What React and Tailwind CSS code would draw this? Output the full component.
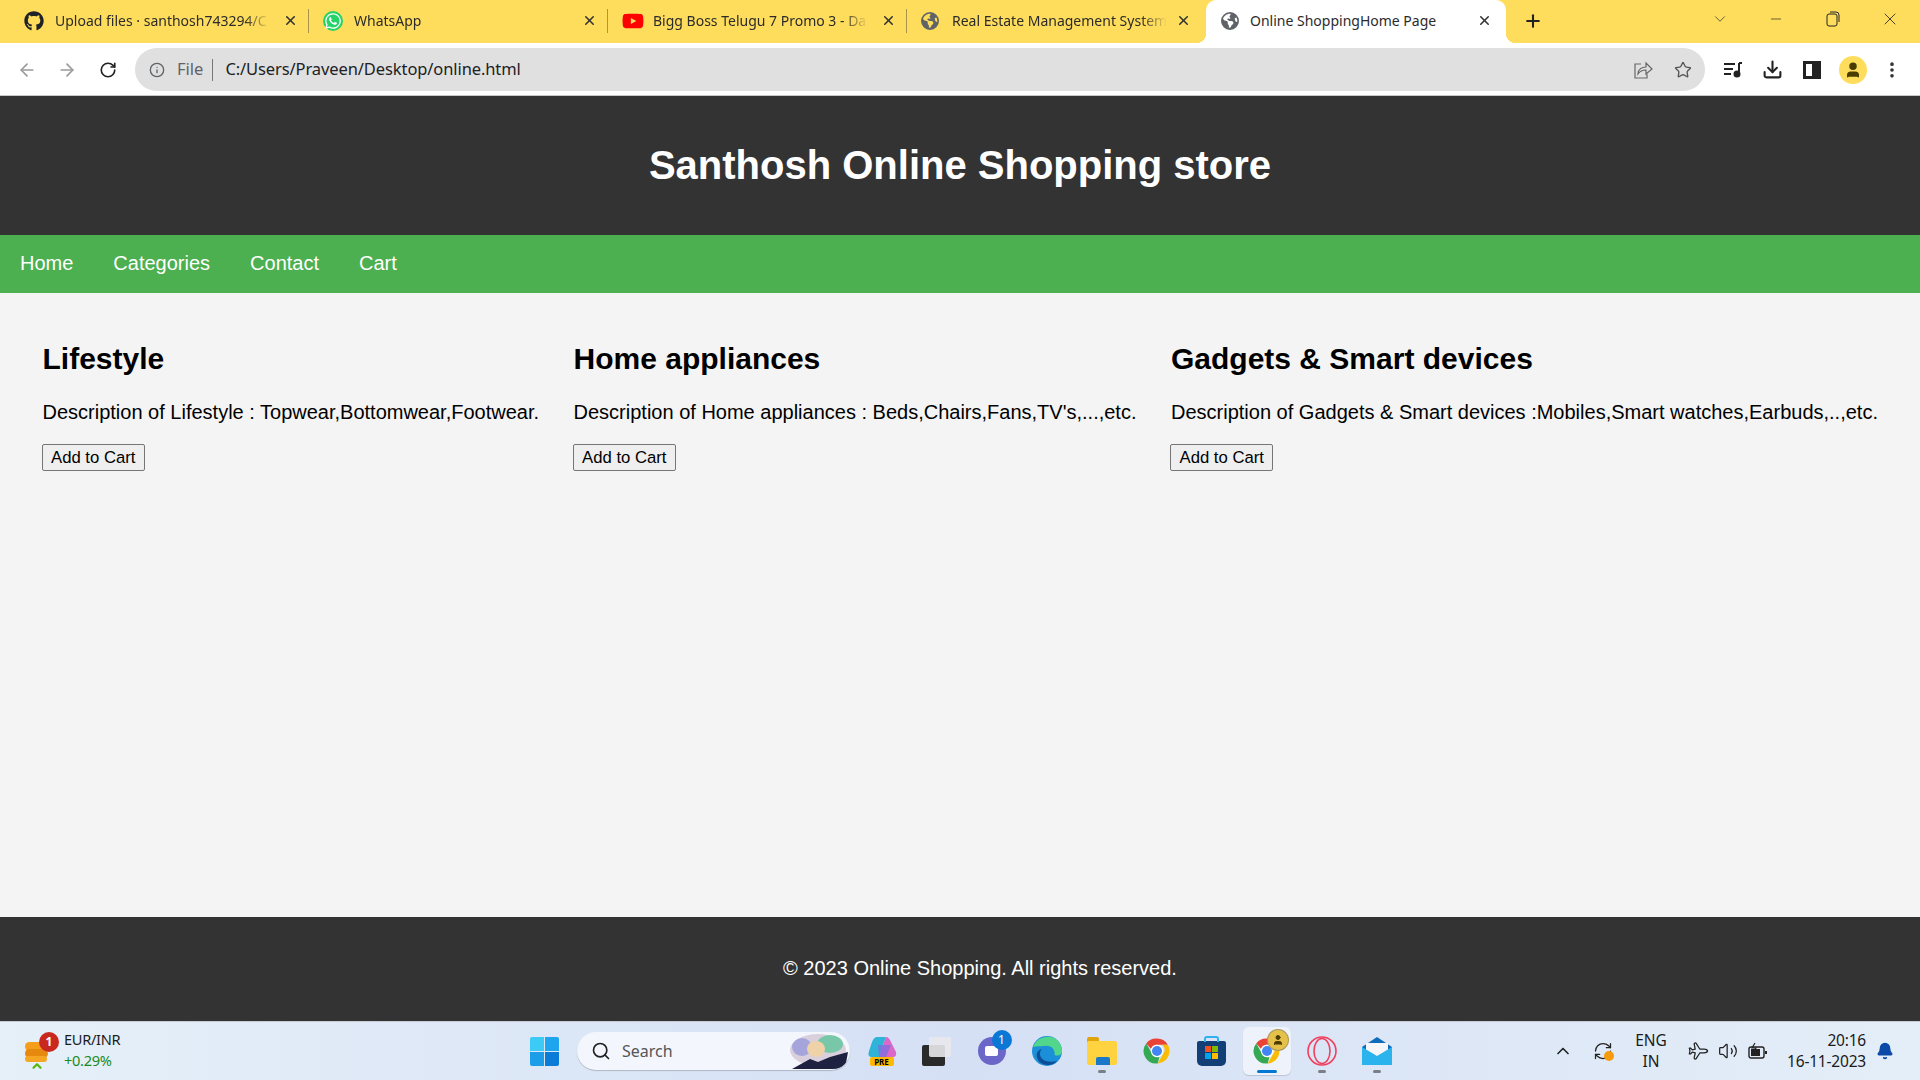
import { ArrowLeft, ArrowRight, RotateCw, Info, Star, X, Plus, ChevronDown, Minus, Download, MoreVertical, Search, ChevronUp, Volume2, Plane, RefreshCw, Bell, User } from 'lucide-react'
import { FaGithub, FaWhatsapp, FaYoutube } from 'react-icons/fa'
import { FaEarthAmericas } from 'react-icons/fa6'

const tabs = [
  { title: 'Upload files · santhosh743294/C', icon: <FaGithub size={20} className="text-[#1f2328]" /> },
  { title: 'WhatsApp', icon: <span className="flex h-5 w-5 items-center justify-center rounded-full bg-[#25d366]"><FaWhatsapp size={18} className="text-white" /></span> },
  { title: 'Bigg Boss Telugu 7 Promo 3 - Da', icon: <FaYoutube size={22} className="text-[#f00]" /> },
  { title: 'Real Estate Management System', icon: <FaEarthAmericas size={18} className="text-[#5f6368]" />, last: true },
]

const products = [
  { name: 'Lifestyle', text: 'Description of Lifestyle : Topwear,Bottomwear,Footwear.' },
  { name: 'Home appliances', text: "Description of Home appliances : Beds,Chairs,Fans,TV's,...,etc." },
  { name: 'Gadgets & Smart devices', text: 'Description of Gadgets & Smart devices :Mobiles,Smart watches,Earbuds,..,etc.' },
]

function ChromeIcon({ size = 30 }) {
  return (
    <svg width={size} height={size} viewBox="0 0 48 48">
      <path d="M24 4a20 20 0 0 1 17.3 10H24a10 10 0 0 0-9.4 6.6L6.7 12A20 20 0 0 1 24 4z" fill="#ea4335" />
      <path d="M41.3 14A20 20 0 0 1 25 44l8.2-14.5A10 10 0 0 0 32 14z" fill="#fbbc04" />
      <path d="M6.7 12l8.9 15.2A10 10 0 0 0 28 33.5L25 44A20 20 0 0 1 6.7 12z" fill="#34a853" />
      <circle cx="24" cy="24" r="10" fill="#fff" />
      <circle cx="24" cy="24" r="8" fill="#4285f4" />
    </svg>
  )
}

function TaskIcon({ children, active, dot }) {
  return (
    <div className="flex h-12 w-[55px] justify-center">
      <div className={`relative flex h-12 w-12 items-center justify-center ${active ? 'rounded-md bg-[#eef3fb] shadow-[0_1px_1px_rgba(0,0,0,0.15)]' : ''}`}>
        {children}
        {dot && <span className="absolute bottom-0.5 left-1/2 h-[3px] w-2 -translate-x-1/2 rounded-full bg-[#7a7f88]" />}
        {active && <span className="absolute bottom-0.5 left-1/2 h-[3px] w-5 -translate-x-1/2 rounded-full bg-[#0078d4]" />}
      </div>
    </div>
  )
}

export default function App() {
  return (
    <div className="flex h-[1080px] w-[1920px] flex-col overflow-hidden font-['Liberation_Sans',sans-serif]">
      {/* Tab strip */}
      <div className="flex h-[43px] shrink-0 items-center bg-[#ffdd5c] pl-[10px] font-['Noto_Sans',sans-serif] text-[14px] text-[#2b2b2b]">
        {tabs.map((tab) => (
          <div key={tab.title} className="flex h-full w-[299px] items-center pl-[14px] pr-[15px]">
            <span className="mb-[2px] flex w-[31px] shrink-0 items-center">{tab.icon}</span>
            <span className="mb-[2px] w-[215px] overflow-hidden whitespace-nowrap [mask-image:linear-gradient(90deg,black_88%,transparent)]">{tab.title}</span>
            <X size={15} strokeWidth={2.5} className="mb-[2px] ml-auto shrink-0 text-[#333]" />
            {!tab.last && <span className="mb-[2px] ml-[10px] mr-[-15px] h-[24px] w-px shrink-0 bg-[#a8954a]" />}
          </div>
        ))}
        <div className="relative flex h-full w-[300px] shrink-0 items-center rounded-t-[10px] bg-white pl-[15px] pr-[14px] before:absolute before:-left-[10px] before:bottom-0 before:h-[10px] before:w-[10px] before:bg-[radial-gradient(circle_at_0_0,#ffdd5c_10px,white_10.5px)] after:absolute after:-right-[10px] after:bottom-0 after:h-[10px] after:w-[10px] after:bg-[radial-gradient(circle_at_100%_0,#ffdd5c_10px,white_10.5px)]">
          <FaEarthAmericas size={18} className="mb-[2px] mr-[11px] text-[#5f6368]" />
          <span className="mb-[2px]">Online ShoppingHome Page</span>
          <X size={15} strokeWidth={2.5} className="mb-[2px] ml-auto text-[#333]" />
        </div>
        <Plus size={20} strokeWidth={2.5} className="mb-[1px] ml-[17px] text-[#222]" />
        <ChevronDown size={18} strokeWidth={1} className="mb-[6px] ml-[168px] text-[#333]" />
        <Minus size={16} strokeWidth={1} className="mb-[6px] ml-[39px] text-[#222]" />
        <svg width="14" height="16" viewBox="0 0 14 16" className="mb-[6px] ml-[42px]" fill="none" stroke="#222"><rect x="1" y="3" width="10" height="12" rx="2" /><path d="M4 1h6a3 3 0 0 1 3 3v7" /></svg>
        <X size={20} strokeWidth={1} className="mb-[6px] ml-[40px] text-[#222]" />
      </div>

      {/* Toolbar */}
      <div className="flex h-[53px] shrink-0 items-center border-b border-[#c8c8c8] bg-white pt-[1px]">
        <ArrowLeft size={20} className="ml-[17px] text-[#9a9a9a]" />
        <ArrowRight size={20} className="ml-[20px] text-[#9a9a9a]" />
        <RotateCw size={18} strokeWidth={2.2} className="ml-[22px] text-[#222]" />
        <div className="ml-[18px] flex h-[43px] w-[1570px] items-center rounded-full bg-[#e0e0e0] pl-[14px] font-['Noto_Sans',sans-serif] text-[16.5px]">
          <Info size={16} className="text-[#5f6368]" />
          <span className="ml-[12px] text-[#5f6368]">File</span>
          <span className="ml-[9px] h-[22px] w-px bg-[#777]" />
          <span className="ml-[12px] tracking-[-0.1px] text-[#202124]">C:/Users/Praveen/Desktop/online.html</span>
          <svg width="20" height="20" viewBox="0 0 20 20" className="ml-auto" fill="none" stroke="#666" strokeWidth="1.2"><path d="M8 4H2v14h12v-4" /><path d="M5 14c0-5 4-7 8-7V3l6 6-6 5v-4c-3 0-6 1-8 4z" /></svg>
          <Star size={18} strokeWidth={1.8} className="ml-[21px] mr-[13px] text-[#555]" />
        </div>
        <svg width="20" height="18" viewBox="0 0 20 18" className="ml-[18px]" fill="none" stroke="#222" strokeWidth="2"><path d="M1 3h11M1 8h9M1 13h7" /><path d="M16 2v11" /><path d="M16 2h3" /><circle cx="14" cy="13" r="2.5" fill="#222" /></svg>
        <Download size={21} strokeWidth={2.4} className="ml-[19px] text-[#222]" />
        <div className="ml-[20px] flex h-[18px] w-[18px] justify-end border-[3px] border-[#222]"><div className="w-[6px] bg-[#222]" /></div>
        <div className="ml-[18px] flex h-7 w-7 items-center justify-center rounded-full bg-[#ffdd5c]"><User size={18} fill="#4a3c00" className="text-[#4a3c00]" /></div>
        <MoreVertical size={20} strokeWidth={2.4} className="ml-[15px] text-[#333]" />
      </div>

      {/* Page */}
      <header className="flex h-[139px] shrink-0 items-center justify-center bg-[#333] pb-[2px] text-[40px] font-bold text-white">
        Santhosh Online Shopping store
      </header>
      <nav className="flex h-[58px] shrink-0 items-center gap-[40px] bg-[#4caf50] pb-[2px] pl-[20px] text-[20px] text-white">
        <span>Home</span>
        <span>Categories</span>
        <span>Contact</span>
        <span>Cart</span>
      </nav>
      <main className="flex flex-1 gap-[34.5px] bg-[#f4f4f4] pl-[42.5px] pt-[48px] text-black">
        {products.map((p) => (
          <section key={p.name} className="whitespace-nowrap">
            <h2 className="text-[30px] font-bold leading-[36px]">{p.name}</h2>
            <p className="mt-[23px] text-[20px] leading-[24px]">{p.text}</p>
            <button className="mt-[20px] -ml-px block h-[27px] rounded-[2px] border border-[#767676] bg-[#efefef] px-[8.5px] pt-[1px] text-[16.7px] leading-none">Add to Cart</button>
          </section>
        ))}
      </main>
      <footer className="flex h-[104px] shrink-0 items-center justify-center bg-[#333] pb-[2px] pl-[40px] text-[20px] text-white">
        © 2023 Online Shopping. All rights reserved.
      </footer>

      {/* Taskbar */}
      <div className="flex h-[59px] shrink-0 items-center border-t border-[#c5cad3] bg-gradient-to-r from-[#e6f0f9] via-[#d5e0f5] to-[#e4eef8] font-['Noto_Sans',sans-serif] text-[#1b1b1b]">
        <div className="flex w-[517px] shrink-0 items-center pl-[25px]">
          <div className="relative h-[34px] w-[26px]">
            <div className="absolute left-0 top-[8px] h-[9px] w-[23px] rounded-full bg-[#f59e1b]" />
            <div className="absolute left-0 top-[15px] h-[9px] w-[23px] rounded-full bg-[#e8890f]" />
            <div className="absolute left-0 top-[22px] h-[6px] w-[22px] rounded-full bg-[#f5a623]" />
            <ChevronUp size={14} strokeWidth={4} className="absolute left-[5px] top-[25px] text-[#5cb811]" />
            <span className="absolute left-[14px] -top-[2px] flex h-5 w-5 items-center justify-center rounded-full bg-[#c8281e] text-[12px] font-bold text-white">1</span>
          </div>
          <div className="ml-[13px] mb-[2px] text-[14.6px] leading-[21px] tracking-[-0.3px]">
            <div>EUR/INR</div>
            <div className="text-[#1a8a1a]">+0.29%</div>
          </div>
        </div>

        <TaskIcon>
          <div className="grid h-[29px] w-[29px] grid-cols-2 gap-px">
            <span className="rounded-tl-[2px] bg-[#3ccbf4]" />
            <span className="rounded-tr-[2px] bg-[#1ea5ee]" />
            <span className="rounded-bl-[2px] bg-[#1b9de8]" />
            <span className="rounded-br-[2px] bg-[#0a7cd8]" />
          </div>
        </TaskIcon>

        <div className="ml-[5px] flex h-[38px] w-[273px] shrink-0 items-center overflow-hidden rounded-full bg-[#f3f6fd] pl-[14px] shadow-[0_1px_1px_rgba(0,0,0,0.2)]">
          <Search size={20} strokeWidth={2} className="text-[#222]" />
          <span className="ml-[11px] text-[16px] text-[#555]">Search</span>
          <svg width="62" height="36" viewBox="0 0 62 36" className="ml-auto">
            <ellipse cx="30" cy="17" rx="28" ry="16" fill="#c9b8c8" opacity="0.6" />
            <ellipse cx="42" cy="11" rx="13" ry="9" fill="#78c7a8" />
            <ellipse cx="14" cy="14" rx="10" ry="9" fill="#8f93dc" opacity="0.7" />
            <ellipse cx="28" cy="16" rx="9" ry="8" fill="#f0d2a8" />
            <path d="M4 36 L22 26 L30 29 L42 24 L60 19 L58 30 Q54 36 44 36 Z" fill="#1e2140" />
          </svg>
        </div>

        <div className="ml-[4px] flex">
          <TaskIcon>
            <div className="relative h-[30px] w-[30px]">
              <svg width="30" height="24" viewBox="0 0 30 24">
                <path d="M10 1h9l-7 20H5Q0 21 2 15l3-9Q7 1 10 1z" fill="#2fb4d8" />
                <path d="M19 1q3 0 5 5l5 10q1 5-3 5H12z" fill="#d968c8" />
                <path d="M11 9h13l-5 12h-7z" fill="#7a6fe0" opacity="0.75" />
              </svg>
              <span className="absolute bottom-0 left-[3px] flex h-[9px] w-[24px] items-center justify-center rounded-[2px] bg-[#ffb900] text-[8px] font-bold leading-none text-black">PRE</span>
            </div>
          </TaskIcon>
          <TaskIcon>
            <div className="relative h-[29px] w-[29px]">
              <div className="absolute bottom-0 left-0 h-[21px] w-[23px] rounded-[2px] bg-[#2a2a2a]" />
              <div className="absolute right-0 top-0 h-[20px] w-[22px] rounded-[2px] bg-[#e9e9ec]/90" />
            </div>
          </TaskIcon>
          <TaskIcon>
            <div className="relative flex h-[28px] w-[28px] items-center justify-center rounded-full bg-[#6a67c9]">
              <span className="h-[10px] w-[13px] rounded-[2px] bg-white" />
              <span className="absolute -right-[6px] -top-[7px] flex h-5 w-5 items-center justify-center rounded-full bg-[#0a78d4] text-[12px] text-white">1</span>
            </div>
          </TaskIcon>
          <TaskIcon>
            <svg width="30" height="30" viewBox="0 0 30 30">
              <circle cx="15" cy="15" r="15" fill="#1b8fd8" />
              <path d="M1 11C4 2 14-1 21 1.5c6 2.5 9 8 9 13.500 0 4-4 5.500-7.500 4 1-6-4-10-10-9-5 .5-9 0-11.500 1z" fill="#52d68c" />
              <path d="M10 13c-4 4-2 10 4 12 3 1 7 1 11 0-5 6-15 5-19-1-3-5-1-10 4-11z" fill="#0c4f96" />
            </svg>
          </TaskIcon>
          <TaskIcon dot>
            <div className="relative h-[28px] w-[30px]">
              <div className="absolute left-0 top-0 h-[10px] w-[12px] rounded-t-[2px] bg-[#e0a50a]" />
              <div className="absolute bottom-0 left-0 h-[24px] w-[30px] rounded-[2px] bg-[#ffd23f]" />
              <div className="absolute bottom-0 left-[9px] h-[8px] w-[14px] rounded-t-[2px] bg-[#1a78c8]" />
            </div>
          </TaskIcon>
          <TaskIcon><ChromeIcon /></TaskIcon>
          <TaskIcon>
            <div className="relative mt-[4px] h-[25px] w-[29px] rounded-b-[5px] rounded-t-[2px] bg-[#123f75]">
              <div className="absolute left-[8px] top-[5px] grid h-[13px] w-[13px] grid-cols-2 gap-px">
                <span className="bg-[#f25022]" /><span className="bg-[#7fba00]" /><span className="bg-[#00a4ef]" /><span className="bg-[#ffb900]" />
              </div>
              <div className="absolute -top-[5px] left-[7px] h-[6px] w-[15px] rounded-t-[3px] border-2 border-b-0 border-[#2db2ef]" />
            </div>
          </TaskIcon>
          <TaskIcon active>
            <ChromeIcon />
            <span className="absolute right-[3px] top-[3px] flex h-5 w-5 items-center justify-center rounded-full bg-[#e6c14a] ring-1 ring-[#a89a5a]"><User size={12} fill="#4a3c00" className="text-[#4a3c00]" /></span>
          </TaskIcon>
          <TaskIcon dot>
            <svg width="30" height="30" viewBox="0 0 30 30" fill="none" stroke="#f0405f" strokeWidth="1.6">
              <circle cx="15" cy="15" r="14" />
              <ellipse cx="15" cy="15" rx="8" ry="12.5" />
            </svg>
          </TaskIcon>
          <TaskIcon dot>
            <svg width="30" height="28" viewBox="0 0 30 28">
              <path d="M0 10 15 0l15 10v18H0z" fill="#0f6cbd" />
              <path d="M4 6h22v10l-11 6-11-6z" fill="#f4f6fa" />
              <path d="M0 10l15 9 15-9v18H0z" fill="#2bb3ee" />
            </svg>
          </TaskIcon>
        </div>

        <div className="ml-[149px] flex items-center">
          <ChevronUp size={20} strokeWidth={2} className="text-[#222]" />
          <div className="relative ml-[20px] h-5 w-5">
            <RefreshCw size={20} strokeWidth={1.5} className="text-[#222]" />
            <span className="absolute -right-[1px] bottom-0 h-[10px] w-[10px] rounded-full bg-[#f59b0c]" />
          </div>
          <div className="ml-[22px] w-[32px] whitespace-nowrap text-center text-[15.5px] leading-[21px]">
            <div>ENG</div>
            <div>IN</div>
          </div>
          <Plane size={20} strokeWidth={1.5} className="ml-[20px] rotate-45 text-[#222]" />
          <Volume2 size={20} strokeWidth={1.5} className="ml-[11px] text-[#222]" />
          <svg width="20" height="18" viewBox="0 0 20 18" className="ml-[10px]" fill="none" stroke="#222" strokeWidth="1.4"><rect x="1" y="5" width="15" height="11" rx="2" /><rect x="3" y="7" width="9" height="7" fill="#222" stroke="none" /><path d="M18 9v3" strokeWidth="2" /><path d="M7 1 4 6h4L5 10" strokeWidth="1.2" /></svg>
          <div className="ml-[12px] w-[86px] text-right text-[15.5px] leading-[21px] tracking-[-0.2px]">
            <div>20:16</div>
            <div className="whitespace-nowrap">16-11-2023</div>
          </div>
          <Bell size={18} fill="#0c4aa8" className="ml-[10px] text-[#0c4aa8]" />
        </div>
      </div>
    </div>
  )
}
